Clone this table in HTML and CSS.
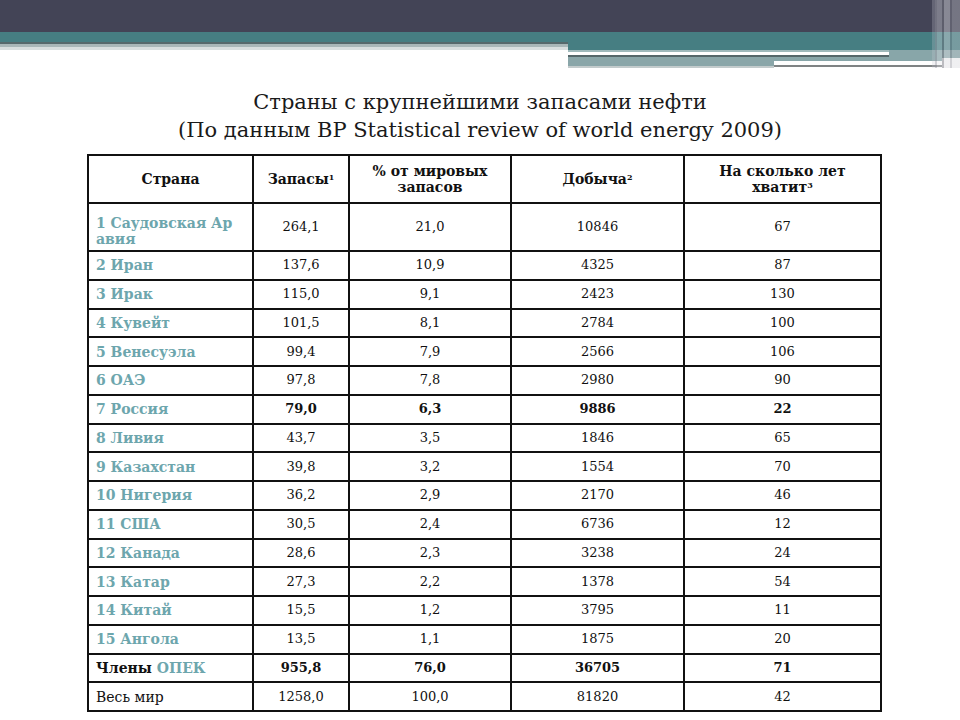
FILE: index.html
```html
<!DOCTYPE html>
<html lang="ru">
<head>
<meta charset="utf-8">
<link rel="stylesheet" href="styles.css">
</head>
<body>
<header class="band">
  <div class="band-dark"></div>
  <div class="band-lower">
    <div class="band-left"></div>
    <div class="band-right">
      <div class="br-teal"></div>
      <div class="br-row1">
        <div class="br-lines1"></div>
        <div class="br-lightteal"></div>
      </div>
      <div class="br-row2">
        <div class="br-gray"></div>
        <div class="br-lines2"></div>
      </div>
    </div>
  </div>
  <div class="band-stripes"></div>
</header>

<h1 class="title">Страны с крупнейшими запасами нефти<br>(По данным BP Statistical review of world energy 2009)</h1>

<table class="oil">
  <colgroup>
    <col class="c1"><col class="c2"><col class="c3"><col class="c4"><col class="c5">
  </colgroup>
  <tr class="head">
    <th>Страна</th>
    <th>Запасы<sup>1</sup></th>
    <th>% от мировых<br>запасов</th>
    <th>Добыча<sup>2</sup></th>
    <th>На сколько лет<br>хватит<sup>3</sup></th>
  </tr>
  <tr class="tall">
    <td class="name"><span class="wrap">1 Саудовская Ар<br>авия</span></td><td>264,1</td><td>21,0</td><td>10846</td><td>67</td>
  </tr>
  <tr><td class="name">2 Иран</td><td>137,6</td><td>10,9</td><td>4325</td><td>87</td></tr>
  <tr><td class="name">3 Ирак</td><td>115,0</td><td>9,1</td><td>2423</td><td>130</td></tr>
  <tr><td class="name">4 Кувейт</td><td>101,5</td><td>8,1</td><td>2784</td><td>100</td></tr>
  <tr><td class="name">5 Венесуэла</td><td>99,4</td><td>7,9</td><td>2566</td><td>106</td></tr>
  <tr><td class="name">6 ОАЭ</td><td>97,8</td><td>7,8</td><td>2980</td><td>90</td></tr>
  <tr class="strong"><td class="name">7 Россия</td><td>79,0</td><td>6,3</td><td>9886</td><td>22</td></tr>
  <tr><td class="name">8 Ливия</td><td>43,7</td><td>3,5</td><td>1846</td><td>65</td></tr>
  <tr><td class="name">9 Казахстан</td><td>39,8</td><td>3,2</td><td>1554</td><td>70</td></tr>
  <tr><td class="name">10 Нигерия</td><td>36,2</td><td>2,9</td><td>2170</td><td>46</td></tr>
  <tr><td class="name">11 США</td><td>30,5</td><td>2,4</td><td>6736</td><td>12</td></tr>
  <tr><td class="name">12 Канада</td><td>28,6</td><td>2,3</td><td>3238</td><td>24</td></tr>
  <tr><td class="name">13 Катар</td><td>27,3</td><td>2,2</td><td>1378</td><td>54</td></tr>
  <tr><td class="name">14 Китай</td><td>15,5</td><td>1,2</td><td>3795</td><td>11</td></tr>
  <tr><td class="name">15 Ангола</td><td>13,5</td><td>1,1</td><td>1875</td><td>20</td></tr>
  <tr class="strong"><td class="name dark">Члены <span class="teal">ОПЕК</span></td><td>955,8</td><td>76,0</td><td>36705</td><td>71</td></tr>
  <tr><td class="name plain">Весь мир</td><td>1258,0</td><td>100,0</td><td>81820</td><td>42</td></tr>
</table>
</body>
</html>
```

FILE: styles.css
```css
html, body {
  margin: 0;
  padding: 0;
  background: #ffffff;
}
body {
  width: 960px;
  height: 720px;
  overflow: hidden;
  font-family: "DejaVu Serif", "Liberation Serif", serif;
  color: #111;
}

/* decorative top band */
.band {
  position: relative;
  height: 70px;
}
.band-dark {
  height: 32px;
  background: #434456;
}
.band-lower {
  display: flex;
  height: 38px;
}
.band-left {
  width: 568px;
  background: linear-gradient(to bottom,
    #467e82 0, #467e82 10px,
    #56696c 10px, #56696c 12px,
    #a9b7b8 12px, #a9b7b8 15px,
    #d9dfdf 15px, #d9dfdf 18px,
    #ffffff 18px);
}
.band-right {
  flex: 1;
  display: flex;
  flex-direction: column;
}
.br-teal {
  height: 18px;
  background: #467e82;
}
.br-row1 {
  display: flex;
  height: 8px;
}
.br-lines1 {
  width: 321px;
  background: linear-gradient(to bottom,
    #9fb9bb 0, #9fb9bb 2px,
    #ffffff 2px, #ffffff 5px,
    #55676a 5px, #55676a 7px,
    #8aa6a9 7px);
}
.br-lightteal {
  flex: 1;
  background: #88a6a9;
}
.br-row2 {
  display: flex;
  height: 12px;
}
.br-gray {
  width: 206px;
  background: linear-gradient(to bottom,
    #8aa6a9 0, #8aa6a9 8px,
    #c3cbcc 8px, #c3cbcc 10px,
    #ffffff 10px);
}
.br-lines2 {
  width: 168px;
  background: linear-gradient(to bottom,
    #88a6a9 0, #88a6a9 3px,
    #ffffff 3px, #ffffff 7px,
    #7f8384 7px, #7f8384 9px,
    #ffffff 9px);
}
.band-stripes {
  position: absolute;
  top: 0;
  right: 0;
  width: 28px;
  height: 68px;
  background: linear-gradient(to right,
    rgba(200,200,210,0.25) 0, rgba(200,200,210,0.25) 3px,
    rgba(160,160,170,0.5) 3px, rgba(160,160,170,0.5) 5px,
    rgba(230,230,235,0.35) 5px, rgba(230,230,235,0.35) 10px,
    rgba(120,120,130,0.5) 10px, rgba(120,120,130,0.5) 12px,
    rgba(220,220,225,0.45) 12px, rgba(220,220,225,0.45) 18px,
    rgba(140,140,150,0.4) 18px, rgba(140,140,150,0.4) 20px,
    rgba(210,210,215,0.35) 20px);
}

/* title */
.title {
  margin: 18px 0 0;
  text-align: center;
  font-family: "DejaVu Serif", serif;
  font-weight: normal;
  font-size: 21px;
  line-height: 28px;
  color: #1a1a1a;
}

/* table */
.oil {
  margin: 10px 0 0 87px;
  width: 793px;
  border-collapse: collapse;
  table-layout: fixed;
  font-size: 13px;
}
.c1 { width: 165px; }
.c2 { width: 96px; }
.c3 { width: 162px; }
.c4 { width: 173px; }
.c5 { width: 197px; }

.oil th, .oil td {
  border: 2px solid #111;
  text-align: center;
  vertical-align: middle;
  padding: 0 6px;
  height: 26.75px;
  line-height: 16px;
}
.oil th {
  font-weight: bold;
  font-size: 14px;
  height: 46px;
}
.oil sup {
  font-size: 8px;
  vertical-align: 4px;
  line-height: 0;
}
.oil tr.tall td {
  height: 46px;
}
.oil td.name {
  text-align: left;
  padding-left: 7px;
  font-weight: bold;
  font-size: 14px;
  color: #6da6ad;
}
.oil td.name .wrap {
  display: block;
  line-height: 16px;
  padding-top: 7px;
}
.oil td.name.dark {
  color: #111;
}
.oil td.name .teal {
  color: #6da6ad;
}
.oil td.name.plain {
  font-weight: normal;
  font-size: 14px;
  color: #111;
}
.oil tr.strong td {
  font-weight: bold;
  font-size: 13px;
}
.oil tr.strong td.name {
  font-size: 14px;
}
```
